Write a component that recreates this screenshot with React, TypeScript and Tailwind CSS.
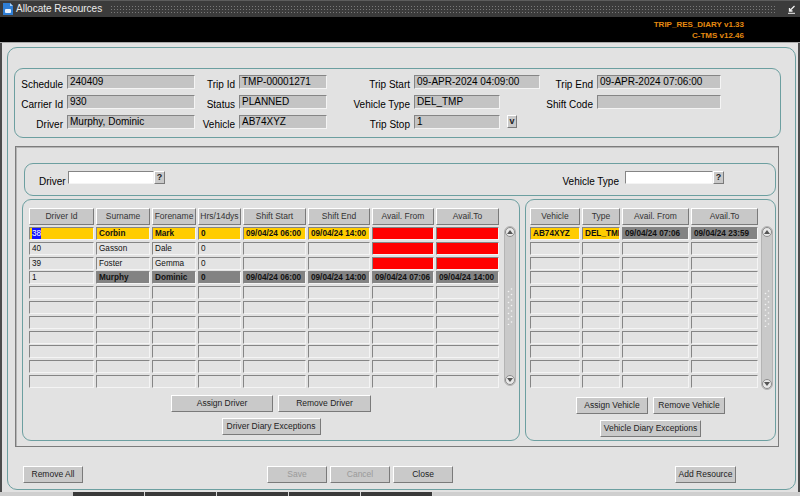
import React from "react";

type Tone = "plain" | "yellow" | "red" | "gray";
type CellData = { v?: string; tone?: Tone; bold?: boolean; sel?: boolean };
type Col = { name: string; w: string };

const toneClass: Record<Tone, string> = {
  plain: "bg-[#e3e3e3]",
  yellow: "bg-[#ffcc00]",
  red: "bg-[#ff0000]",
  gray: "bg-[#838383]",
};

const driverCols: Col[] = [
  { name: "Driver Id", w: "w-[65px]" },
  { name: "Surname", w: "w-[54px]" },
  { name: "Forename", w: "w-[44px]" },
  { name: "Hrs/14dys", w: "w-[43px]" },
  { name: "Shift Start", w: "w-[63px]" },
  { name: "Shift End", w: "w-[62px]" },
  { name: "Avail. From", w: "w-[62px]" },
  { name: "Avail.To", w: "w-[63px]" },
];

const vehicleCols: Col[] = [
  { name: "Vehicle", w: "w-[50px]" },
  { name: "Type", w: "w-[38px]" },
  { name: "Avail. From", w: "w-[67px]" },
  { name: "Avail.To", w: "w-[67px]" },
];

const yel = (v: string): CellData => ({ v, tone: "yellow", bold: true });
const gry = (v: string): CellData => ({ v, tone: "gray", bold: true });
const red: CellData = { tone: "red" };

const pad = (rows: CellData[][], n: number) => [...rows, ...Array.from({ length: n - rows.length }, () => [] as CellData[])];

const driverRows = pad(
  [
    [{ v: "38", tone: "yellow", sel: true }, yel("Corbin"), yel("Mark"), yel("0"), yel("09/04/24 06:00"), yel("09/04/24 14:00"), red, red],
    [{ v: "40" }, { v: "Gasson" }, { v: "Dale" }, { v: "0" }, {}, {}, red, red],
    [{ v: "39" }, { v: "Foster" }, { v: "Gemma" }, { v: "0" }, {}, {}, red, red],
    [{ v: "1" }, gry("Murphy"), gry("Dominic"), gry("0"), gry("09/04/24 06:00"), gry("09/04/24 14:00"), gry("09/04/24 07:06"), gry("09/04/24 14:00")],
  ],
  11
);

const vehicleRows = pad([[yel("AB74XYZ"), yel("DEL_TMP"), gry("09/04/24 07:06"), gry("09/04/24 23:59")]], 11);

const raised = "border border-t-white border-l-white border-r-[#7a7a7a] border-b-[#7a7a7a]";
const sunken = "border border-t-[#858585] border-l-[#858585] border-r-[#f4f4f4] border-b-[#f4f4f4]";

function Label({ w, text }: { w: string; text: string }) {
  return <div className={`${w} shrink-0 pr-[4px] pt-[4px] text-right text-[10px] leading-[12px] text-black whitespace-nowrap`}>{text}</div>;
}

function Field({ w, value }: { w: string; value?: string }) {
  return (
    <div className={`${w} ${sunken} h-[14px] shrink-0 bg-[#c4c4c4] pl-[2px] text-[10px] leading-[12px] text-black whitespace-nowrap overflow-hidden`}>
      {value}
    </div>
  );
}

function Btn({ w, text, disabled }: { w: string; text: string; disabled?: boolean }) {
  return (
    <div className={`${w} ${raised} h-[17px] shrink-0 flex items-center justify-center bg-[#c9c9c9] text-[8.5px] ${disabled ? "text-[#9a9a9a]" : "text-[#222]"}`}>
      {text}
    </div>
  );
}

function Cell({ w, d }: { w: string; d: CellData }) {
  const tone = toneClass[d.tone ?? "plain"];
  return (
    <div className={`${w} ${tone} ${sunken} h-[13px] shrink-0 overflow-hidden whitespace-nowrap pl-[2px] text-[8.2px] leading-[11px] text-[#111] ${d.bold ? "font-bold" : ""}`}>
      {d.sel ? <span className="inline-block h-[11px] bg-[#1414ff] text-white">{d.v}</span> : d.v}
    </div>
  );
}

function Grid({ cols, rows }: { cols: Col[]; rows: CellData[][] }) {
  return (
    <div className="flex flex-col">
      <div className="flex gap-[2px]">
        {cols.map((c) => (
          <div key={c.name} className={`${c.w} ${raised} h-[17px] shrink-0 bg-[#c8c8c8] text-center text-[8.5px] leading-[15px] text-[#333]`}>
            {c.name}
          </div>
        ))}
      </div>
      <div className="mt-[2px] flex flex-col gap-[1.8px]">
        {rows.map((r, i) => (
          <div key={i} className="flex gap-[2px]">
            {cols.map((c, j) => (
              <Cell key={j} w={c.w} d={r[j] ?? {}} />
            ))}
          </div>
        ))}
      </div>
    </div>
  );
}

function Arrow({ up }: { up?: boolean }) {
  return (
    <div className="w-[10px] h-[10px] shrink-0 rounded-full border border-[#8c8c8c] bg-[#e8e8e8] flex items-center justify-center">
      <svg width="6" height="4" viewBox="0 0 6 4">
        <path d={up ? "M3 0L6 4H0Z" : "M0 0H6L3 4Z"} fill="#555" />
      </svg>
    </div>
  );
}

function Scroll({ h }: { h: string }) {
  return (
    <div className={`${h} w-[12px] shrink-0 flex flex-col items-center rounded-[6px] border border-[#b4b4b4] bg-[#c9c9c9]`}>
      <Arrow up />
      <div className="flex-1 flex items-center">
        <svg width="6" height="38" viewBox="0 0 6 38">
          {Array.from({ length: 7 }, (_, i) => (
            <g key={i} fill="#f4f4f4">
              <circle cx="4.5" cy={2 + i * 5.5} r="0.8" />
              <circle cx="1.5" cy={4.5 + i * 5.5} r="0.8" />
            </g>
          ))}
        </svg>
      </div>
      <Arrow />
    </div>
  );
}

function Lookup() {
  return <div className={`${raised} w-[11px] h-[13px] shrink-0 bg-[#c9c9c9] text-center text-[9px] leading-[11px] font-bold text-[#222]`}>?</div>;
}

export default function App() {
  return (
    <div className="w-[800px] h-[496px] overflow-hidden flex flex-col bg-[#e2e2e2] font-['Liberation_Sans',Arial,sans-serif]">
      {/* title bar */}
      <div className="h-[17px] shrink-0 flex items-center bg-[#3b3b3b] border-t border-[#5c5c5c]">
        <svg className="ml-[3px] shrink-0" width="10" height="12" viewBox="0 0 10 12">
          <path d="M0 0H7L10 3V12H0Z" fill="#2f7fd6" />
          <path d="M7 0V3H10Z" fill="#a8d0f7" />
          <rect x="2" y="6" width="6" height="4" rx="1" fill="#e8f2ff" />
        </svg>
        <div className="ml-[3px] text-[10px] leading-[14px] text-[#ececec] whitespace-nowrap">Allocate Resources</div>
        <div className="ml-[8px] mr-[12px] h-[9px] flex-1 bg-[radial-gradient(circle,#7a7a7a_0.7px,transparent_1px)] bg-[length:3px_3px]" />
        <svg className="mr-[4px] shrink-0" width="9" height="9" viewBox="0 0 9 9">
          <path d="M7.5 1L2.5 6M2.5 3V6H5.5" stroke="#f2f2f2" strokeWidth="1.3" fill="none" />
          <path d="M1 8.3H8" stroke="#f2f2f2" strokeWidth="1" />
        </svg>
      </div>

      {/* version band */}
      <div className="h-[25px] shrink-0 bg-black pr-[56px] pt-[1.5px] flex flex-col items-end text-[8px] leading-[11px] font-bold text-[#e58a10]">
        <div>TRIP_RES_DIARY v1.33</div>
        <div>C-TMS v12.46</div>
      </div>
      <div className="h-px shrink-0 bg-[#a9a9a9]" />

      {/* window body */}
      <div className="h-[449px] shrink-0 border-l-2 border-r-2 border-[#4c4c4c] pl-[5px] pt-[4px]">
        <div className="w-[789px] h-[443px] rounded-[10px] border border-[#6c9fa0] flex flex-col">
          {/* trip header */}
          <div className="ml-[6px] mt-[20px] w-[767px] h-[70px] shrink-0 rounded-[9px] border border-[#6c9fa0] pt-[6px] flex flex-col gap-[6px]">
            <div className="flex h-[14px]">
              <Label w="w-[52px]" text="Schedule" />
              <Field w="w-[128px]" value="240409" />
              <Label w="w-[44px]" text="Trip Id" />
              <Field w="w-[88px]" value="TMP-00001271" />
              <Label w="w-[87px]" text="Trip Start" />
              <Field w="w-[126px]" value="09-APR-2024 04:09:00" />
              <Label w="w-[57px]" text="Trip End" />
              <Field w="w-[124px]" value="09-APR-2024 07:06:00" />
            </div>
            <div className="flex h-[14px]">
              <Label w="w-[52px]" text="Carrier Id" />
              <Field w="w-[128px]" value="930" />
              <Label w="w-[44px]" text="Status" />
              <Field w="w-[88px]" value="PLANNED" />
              <Label w="w-[87px]" text="Vehicle Type" />
              <Field w="w-[86px]" value="DEL_TMP" />
              <div className="w-[40px] shrink-0" />
              <Label w="w-[57px]" text="Shift Code" />
              <Field w="w-[124px]" />
            </div>
            <div className="flex h-[14px]">
              <Label w="w-[52px]" text="Driver" />
              <Field w="w-[128px]" value="Murphy, Dominic" />
              <Label w="w-[44px]" text="Vehicle" />
              <Field w="w-[88px]" value="AB74XYZ" />
              <Label w="w-[87px]" text="Trip Stop" />
              <Field w="w-[86px]" value="1" />
              <div className={`${raised} ml-[7px] w-[10px] h-[13px] shrink-0 bg-[#c9c9c9] text-center text-[9px] leading-[10px] font-bold text-[#222]`}>v</div>
            </div>
          </div>

          {/* resources frame */}
          <div className="ml-[7px] mt-[8px] w-[764px] h-[301px] shrink-0 border border-[#7c7c7c] shadow-[inset_1px_1px_0_#b5b5b5] flex flex-col">
            <div className="ml-[8px] mt-[16px] w-[752px] h-[33px] shrink-0 rounded-[9px] border border-[#6c9fa0] pt-[7px] flex items-start">
              <div className="ml-[14px] w-[29px] shrink-0 pt-[5px] text-[10px] leading-[11px]">Driver</div>
              <div className={`${sunken} w-[86px] h-[13px] shrink-0 bg-white`} />
              <Lookup />
              <div className="flex-1" />
              <div className="mr-[6px] pt-[5px] text-[10px] leading-[11px]">Vehicle Type</div>
              <div className={`${sunken} w-[88px] h-[13px] shrink-0 bg-white`} />
              <Lookup />
              <div className="w-[51px] shrink-0" />
            </div>

            <div className="ml-[6px] mt-[3px] flex">
              {/* drivers */}
              <div className="w-[498px] h-[242px] shrink-0 rounded-[9px] border border-[#6c9fa0] flex flex-col">
                <div className="pl-[6px] pt-[8px] flex items-start">
                  <Grid cols={driverCols} rows={driverRows} />
                  <div className="ml-[5px] mt-[18px]">
                    <Scroll h="h-[160px]" />
                  </div>
                </div>
                <div className="mt-[7px] flex justify-center gap-[5px]">
                  <Btn w="w-[102px]" text="Assign Driver" />
                  <Btn w="w-[93px]" text="Remove Driver" />
                </div>
                <div className="mt-[6px] flex justify-center">
                  <Btn w="w-[99px]" text="Driver Diary Exceptions" />
                </div>
              </div>

              {/* vehicles */}
              <div className="ml-[5px] w-[251px] h-[242px] shrink-0 rounded-[9px] border border-[#6c9fa0] flex flex-col">
                <div className="pl-[4px] pt-[8px] flex items-start">
                  <Grid cols={vehicleCols} rows={vehicleRows} />
                  <div className="ml-[3px] mt-[18px]">
                    <Scroll h="h-[164px]" />
                  </div>
                </div>
                <div className="mt-[7px] flex justify-center gap-[5px]">
                  <Btn w="w-[72px]" text="Assign Vehicle" />
                  <Btn w="w-[72px]" text="Remove Vehicle" />
                </div>
                <div className="mt-[6px] flex justify-center">
                  <Btn w="w-[101px]" text="Vehicle Diary Exceptions" />
                </div>
              </div>
            </div>
          </div>

          {/* footer buttons */}
          <div className="mt-[19px] flex">
            <div className="ml-[15px]">
              <Btn w="w-[60px]" text="Remove All" />
            </div>
            <div className="ml-[184px] flex gap-[3px]">
              <Btn w="w-[60px]" text="Save" disabled />
              <Btn w="w-[60px]" text="Cancel" disabled />
              <Btn w="w-[60px]" text="Close" />
            </div>
            <div className="ml-[222px]">
              <Btn w="w-[61px]" text="Add Resource" />
            </div>
          </div>
        </div>
      </div>

      {/* status strip */}
      <div className="h-[4px] shrink-0 flex bg-[#3a3a3a]">
        <div className="w-[73px] bg-[#cfcfcf]" />
        {Array.from({ length: 5 }, (_, i) => (
          <div key={i} className="w-[72px] border-r border-[#d8d8d8]" />
        ))}
        <div className="flex-1 bg-[#cfcfcf]" />
      </div>
    </div>
  );
}
